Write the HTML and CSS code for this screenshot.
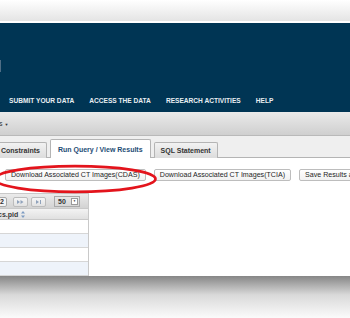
FILE: index.html
```html
<!DOCTYPE html>
<html lang="en">
    <head>
        <meta charset="UTF-8">
        <title>Query Results</title>
        <link rel="stylesheet" href="styles.css">
    </head>
    <body>
        <main class="page">
            <div class="chrome">
            </div>
            <header class="banner">
                <span class="logo-edge"></span>
                <nav class="nav">
                    <a class="nav-link">SUBMIT YOUR DATA</a>
                    <a class="nav-link">ACCESS THE DATA</a>
                    <a class="nav-link">RESEARCH ACTIVITIES</a>
                    <a class="nav-link">HELP</a>
                </nav>
            </header>
            <div class="toolbar">
                <span class="toolbar-menu">s <span class="caret">&#9660;</span></span>
            </div>
            <div class="tabs">
                <span class="tab">Constraints</span>
                <span class="tab tab-active">Run Query / View Results</span>
                <span class="tab">SQL Statement</span>
            </div>
            <div class="actions">
                <button class="button">Download Associated CT Images(CDAS)</button>
                <button class="button">Download Associated CT Images(TCIA)</button>
                <button class="button">Save Results as CSV</button>
                <svg class="highlight" width="170" height="34" viewBox="0 0 170 34">
                    <ellipse cx="85" cy="17" rx="80.5" ry="12.8" fill="none" stroke="#e3141c" stroke-width="2.7"/>
                </svg>
            </div>
            <div class="grid">
                <div class="pager">
                    <span class="page-box">2</span>
                    <span class="page-button">
                        <svg width="7" height="4" viewBox="0 0 7 4">
                            <path d="M0 0 L3 2 L0 4 Z M3.5 0 L6.5 2 L3.5 4 Z" fill="#8fa2bb"/>
                        </svg>
                    </span>
                    <span class="page-button">
                        <svg width="6" height="4" viewBox="0 0 6 4">
                            <path d="M0 0 L3 2 L0 4 Z M4 0 H5 V4 H4 Z" fill="#8fa2bb"/>
                        </svg>
                    </span>
                    <span class="page-size">50<span class="page-size-arrow">&#9660;</span></span>
                </div>
                <div class="grid-head">
                    <span class="grid-title">cs.pid</span>
                    <svg class="sort" width="4" height="7" viewBox="0 0 4 7">
                        <path d="M2 0 L4 2.6 H0 Z M2 7 L4 4.4 H0 Z" fill="#7d9cc2"/>
                    </svg>
                </div>
                <div class="grid-row"></div>
                <div class="grid-row grid-row-alt"></div>
                <div class="grid-row"></div>
                <div class="grid-row grid-row-alt"></div>
            </div>
            <div class="fade">
            </div>
        </main>
    </body>
</html>
```

FILE: styles.css
```css
*
{
    margin: 0;
    padding: 0;
    box-sizing: border-box;
}

body
{
    height: 318px;
    overflow: hidden;

    background: #ffffff;
    font-family: "Liberation Sans", Arial, sans-serif;
}

.page
{
    display: flex;
    flex-direction: column;
    width: 350px;
    overflow: hidden;
}

.chrome
{
    height: 23px;

    background: linear-gradient( #ffffff, #e4e4e4 );
    border-bottom: 2px solid #ffffff;
}

.banner
{
    position: relative;

    display: flex;
    flex-direction: column;
    justify-content: flex-end;
    height: 89px;
    padding: 0 0 7px 9px;

    background: #003554;
}

.logo-edge
{
    position: absolute;
    left: 0;
    top: 37px;

    width: 1px;
    height: 12px;

    background: #4e6d85;
}

.nav
{
    display: flex;
    gap: 15px;
}

.nav-link
{
    color: #e9eef2;
    font-size: 6.6px;
    font-weight: bold;
    line-height: 8px;
}

.toolbar
{
    display: flex;
    align-items: center;
    height: 24px;

    background: linear-gradient( #eaeaea, #cfcfcf );
    border-bottom: 1px solid #b9b9b9;
}

.toolbar-menu
{
    color: #333333;
    font-size: 7px;
    margin-left: -1px;
}

.caret
{
    font-size: 4px;
    vertical-align: middle;
}

.tabs
{
    display: flex;
    align-items: flex-end;
    gap: 3px;
    height: 22px;
    margin-left: -6px;

    background: #efefef;
    border-bottom: 1px solid #b4b4b4;
}

.tab
{
    flex: none;
    height: 16px;
    padding: 0 6px;
    margin-bottom: -1px;

    background: linear-gradient( #f2f2f2, #dcdcdc );
    border: 1px solid #b4b4b4;
    border-bottom: 0;
    border-radius: 2px 2px 0 0;

    color: #333333;
    font-size: 7px;
    font-weight: bold;
    line-height: 15px;
}

.tab-active
{
    height: 19px;
    padding: 0 7px;

    background: #ffffff;

    color: #1d4c74;
    line-height: 19px;
}

.actions
{
    position: relative;

    display: flex;
    gap: 8px;
    height: 35px;
    padding: 11px 0 0 5px;
    white-space: nowrap;
}

.button
{
    flex: none;
    height: 12px;
    padding: 0 5px;

    background: linear-gradient( #ffffff, #f1f1f1 );
    border: 1px solid #bdbdbd;
    border-radius: 2px;

    color: #1f1f1f;
    font-family: inherit;
    font-size: 7.1px;
    line-height: 10px;
}

.highlight
{
    position: absolute;
    left: -10px;
    top: 4px;
}

.grid
{
    display: flex;
    flex-direction: column;
    width: 89px;
    height: 83px;
    overflow: hidden;

    border-right: 1px solid #c9c9c9;
}

.pager
{
    display: flex;
    align-items: center;
    gap: 3px;
    height: 19px;
    padding-top: 1px;

    background: linear-gradient( #ebebeb, #d3d3d3 );
    border-top: 1px solid #c9c9c9;
}

.page-box
{
    width: 14px;
    height: 10px;
    margin-left: -7px;
    margin-right: 3px;
    padding-right: 2px;

    background: #f4f4f4;
    border: 1px solid #a9a9a9;
    border-radius: 2px;

    color: #333333;
    font-size: 7px;
    font-weight: bold;
    line-height: 8px;
    text-align: right;
}

.page-button
{
    display: flex;
    justify-content: center;
    align-items: center;
    width: 15px;
    height: 10px;

    background: linear-gradient( #f6f6f6, #e2e2e2 );
    border: 1px solid #bcbcbc;
    border-radius: 2px;
}

.page-size
{
    display: flex;
    justify-content: space-between;
    align-items: center;
    width: 26px;
    height: 11px;
    margin-left: 5px;
    padding: 0 1px 0 3px;

    background: linear-gradient( #e8e8e8, #d6d6d6 );
    border: 1px solid #a9a9a9;

    color: #333333;
    font-size: 7px;
    font-weight: bold;
}

.page-size-arrow
{
    width: 7px;
    height: 7px;

    background: #ffffff;
    border: 1px solid #9a9a9a;

    font-size: 3px;
    line-height: 5px;
    text-align: center;
}

.grid-head
{
    display: flex;
    align-items: center;
    gap: 3px;
    height: 14px;

    background: linear-gradient( #f3f3f3, #e0e0e0 );
    border-top: 1px solid #c9c9c9;
    border-bottom: 1px solid #c9c9c9;
}

.grid-title
{
    margin-left: -2px;

    color: #3a3a3a;
    font-size: 7px;
    font-weight: bold;
}

.grid-row
{
    flex: none;
    height: 14px;

    background: #ffffff;
    border-bottom: 1px solid #d6d6d6;
}

.grid-row-alt
{
    background: #eef3fa;
}

.fade
{
    height: 42px;

    background: linear-gradient( #868686, #d9d9d9 45%, #fbfbfb );
}
```
